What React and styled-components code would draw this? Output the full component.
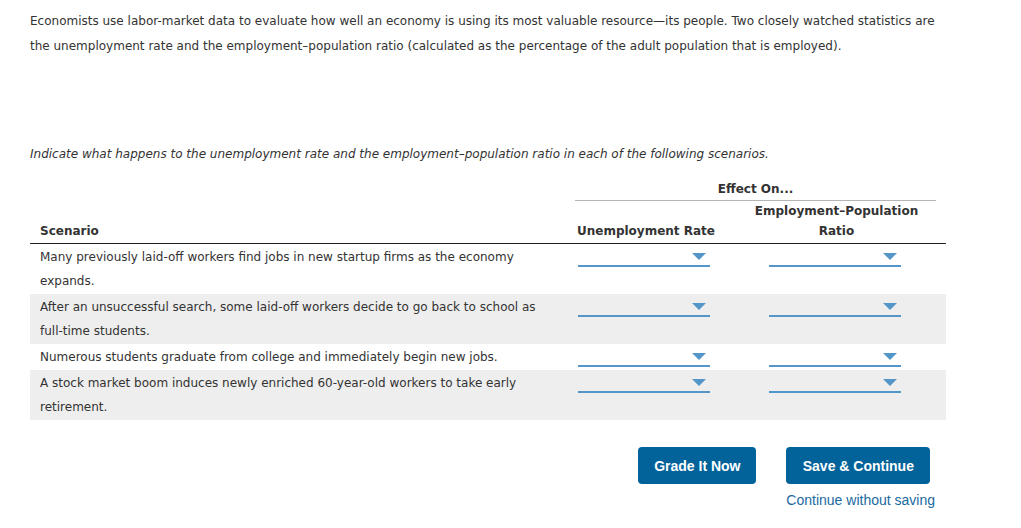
import React from "react";
import styled, { createGlobalStyle } from "styled-components";

const Global = createGlobalStyle`
  html, body { margin: 0; padding: 0; background: #fff; }
  body { font-family: "DejaVu Sans", Verdana, sans-serif; color: #333; }
`;

const Page = styled.div`
  padding: 9px 30px 0 30px;
  width: 916px;
`;

const Intro = styled.p`
  margin: 0;
  font-size: 12px;
  line-height: 25px;
`;

const Instruction = styled.p`
  margin: 85px 0 0 0;
  font-size: 12px;
  line-height: 20px;
  font-style: italic;
`;

const Table = styled.table`
  margin-top: 15px;
  width: 916px;
  border-collapse: collapse;
  table-layout: fixed;
  font-size: 12px;
`;

const HeadCell = styled.th`
  font-weight: bold;
  line-height: 20px;
  vertical-align: bottom;
  padding: 0 10px 2px 10px;
  text-align: ${(p) => (p.$left ? "left" : "center")};
`;

const GroupCell = styled.th`
  font-weight: bold;
  padding: 0 10px;
  line-height: 20px;
`;

const GroupLabel = styled.div`
  border-bottom: 1px solid #b5b5b5;
  padding-bottom: 1px;
`;

const HeadRow = styled.tr`
  border-bottom: 1px solid #222;
`;

const Row = styled.tr`
  background: ${(p) => (p.$shade ? "#eeeeee" : "#fff")};
`;

const ScenarioCell = styled.td`
  padding: 1px 10px 1px 10px;
  line-height: 24px;
  vertical-align: top;
`;

const SelectCell = styled.td`
  vertical-align: top;
  padding: 0;
`;

const Dropdown = styled.div`
  height: 12px;
  width: 128px;
  margin: 8px 0 0 ${(p) => p.$offset}px;
  border-bottom: 2px solid #5596c8;
  display: flex;
  justify-content: flex-end;
  align-items: flex-start;
  padding: 1px 4px 0 0;
  box-sizing: content-box;
  cursor: pointer;
`;

const Arrow = styled.span`
  width: 0;
  height: 0;
  border-left: 7px solid transparent;
  border-right: 7px solid transparent;
  border-top: 7px solid #5596c8;
`;

const Actions = styled.div`
  display: flex;
  justify-content: flex-end;
  gap: 30px;
  margin-top: 27px;
  padding-right: 11px;
  font-family: "Liberation Sans", Arial, sans-serif;
`;

const ButtonColumn = styled.div`
  display: flex;
  flex-direction: column;
  align-items: flex-start;
`;

const Button = styled.button`
  height: 37px;
  width: ${(p) => p.$w}px;
  background: #02629a;
  color: #fff;
  border: none;
  border-radius: 4px;
  font-family: "Liberation Sans", Arial, sans-serif;
  font-weight: bold;
  font-size: 14px;
  cursor: pointer;
`;

const Link = styled.a`
  margin-top: 8px;
  font-size: 14px;
  color: #1a6aa2;
  text-decoration: none;
  line-height: 16px;
`;

const rows = [
  "Many previously laid-off workers find jobs in new startup firms as the economy expands.",
  "After an unsuccessful search, some laid-off workers decide to go back to school as full-time students.",
  "Numerous students graduate from college and immediately begin new jobs.",
  "A stock market boom induces newly enriched 60-year-old workers to take early retirement.",
];

export default function App() {
  return (
    <>
      <Global />
      <Page>
        <Intro>
          Economists use labor-market data to evaluate how well an economy is using its most valuable resource—its people. Two closely watched statistics are the unemployment rate and the employment–population ratio (calculated as the percentage of the adult population that is employed).
        </Intro>
        <Instruction>
          Indicate what happens to the unemployment rate and the employment–population ratio in each of the following scenarios.
        </Instruction>
        <Table>
          <colgroup>
            <col style={{ width: 535 }} />
            <col style={{ width: 162 }} />
            <col style={{ width: 219 }} />
          </colgroup>
          <thead>
            <tr>
              <th />
              <GroupCell colSpan={2}>
                <GroupLabel>Effect On...</GroupLabel>
              </GroupCell>
            </tr>
            <HeadRow>
              <HeadCell $left>Scenario</HeadCell>
              <HeadCell>Unemployment Rate</HeadCell>
              <HeadCell>Employment–Population Ratio</HeadCell>
            </HeadRow>
          </thead>
          <tbody>
            {rows.map((r, i) => (
              <Row key={i} $shade={i % 2 === 1}>
                <ScenarioCell>{r}</ScenarioCell>
                <SelectCell>
                  <Dropdown $offset={13}>
                    <Arrow />
                  </Dropdown>
                </SelectCell>
                <SelectCell>
                  <Dropdown $offset={42}>
                    <Arrow />
                  </Dropdown>
                </SelectCell>
              </Row>
            ))}
          </tbody>
        </Table>
        <Actions>
          <Button $w={118}>Grade It Now</Button>
          <ButtonColumn>
            <Button $w={144}>Save &amp; Continue</Button>
            <Link href="#">Continue without saving</Link>
          </ButtonColumn>
        </Actions>
      </Page>
    </>
  );
}
